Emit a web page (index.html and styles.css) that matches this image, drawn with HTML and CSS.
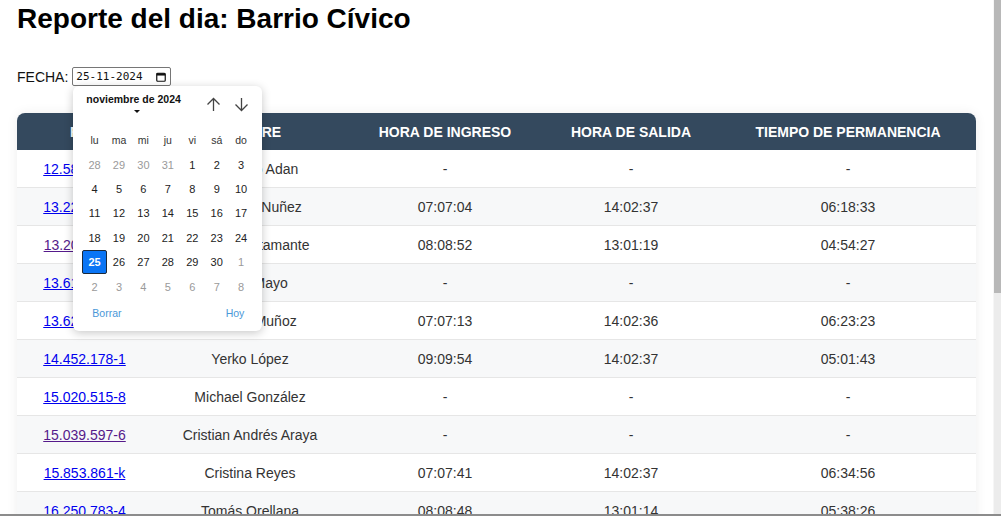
FILE: index.html
```html
<!DOCTYPE html>
<html lang="es">
<head>
<meta charset="utf-8">
<title>Reporte del dia</title>
<link rel="stylesheet" href="styles.css">
</head>
<body>
<div class="shell">
<div class="page">
  <h1 class="title">Reporte del dia: Barrio Cívico</h1>

  <div class="date-row">
    <label class="date-label">FECHA:</label>
    <div class="date-wrap">
      <span class="date-input">
        <span class="date-text">25-11-2024</span>
        <svg class="cal-icon" width="10" height="10" viewBox="0 0 10 10"><rect x="0.75" y="1.25" width="8.5" height="8" rx="1" fill="none" stroke="#111" stroke-width="1.2"/><rect x="0.75" y="1.25" width="8.5" height="2.3" fill="#111"/></svg>
      </span>
      <div class="picker">
        <div class="picker-head">
          <div class="month">
            <span class="month-name">noviembre de 2024</span>
            <span class="caret"></span>
          </div>
          <div class="arrows">
            <svg width="15" height="15" viewBox="0 0 15 15"><path d="M7.5 14V1.5M1.5 7.5L7.5 1.5L13.5 7.5" fill="none" stroke="#444" stroke-width="1.3"/></svg>
            <svg width="15" height="15" viewBox="0 0 15 15"><path d="M7.5 1V13.5M1.5 7.5L7.5 13.5L13.5 7.5" fill="none" stroke="#444" stroke-width="1.3"/></svg>
          </div>
        </div>
        <div class="cal-grid">
          <span class="dn">lu</span><span class="dn">ma</span><span class="dn">mi</span><span class="dn">ju</span><span class="dn">vi</span><span class="dn">sá</span><span class="dn">do</span>
          <span class="d other">28</span><span class="d other">29</span><span class="d other">30</span><span class="d other">31</span><span class="d">1</span><span class="d">2</span><span class="d">3</span>
          <span class="d">4</span><span class="d">5</span><span class="d">6</span><span class="d">7</span><span class="d">8</span><span class="d">9</span><span class="d">10</span>
          <span class="d">11</span><span class="d">12</span><span class="d">13</span><span class="d">14</span><span class="d">15</span><span class="d">16</span><span class="d">17</span>
          <span class="d">18</span><span class="d">19</span><span class="d">20</span><span class="d">21</span><span class="d">22</span><span class="d">23</span><span class="d">24</span>
          <span class="d sel">25</span><span class="d">26</span><span class="d">27</span><span class="d">28</span><span class="d">29</span><span class="d">30</span><span class="d other">1</span>
          <span class="d other">2</span><span class="d other">3</span><span class="d other">4</span><span class="d other">5</span><span class="d other">6</span><span class="d other">7</span><span class="d other">8</span>
        </div>
        <div class="picker-foot">
          <span class="foot-btn">Borrar</span>
          <span class="foot-btn">Hoy</span>
        </div>
      </div>
    </div>
  </div>

  <table class="report">
    <colgroup>
      <col class="c-rut"><col class="c-name"><col class="c-in"><col class="c-out"><col class="c-time">
    </colgroup>
    <thead>
      <tr><th>RUT</th><th>NOMBRE</th><th>HORA DE INGRESO</th><th>HORA DE SALIDA</th><th>TIEMPO DE PERMANENCIA</th></tr>
    </thead>
    <tbody>
      <tr><td><a href="#">12.584.102-3</a></td><td>Francisco Adan</td><td>-</td><td>-</td><td>-</td></tr>
      <tr><td><a href="#">13.221.456-7</a></td><td>Alejandro Nuñez</td><td>07:07:04</td><td>14:02:37</td><td>06:18:33</td></tr>
      <tr><td><a href="#" class="visited">13.205.889-k</a></td><td>Carlos Bustamante</td><td>08:08:52</td><td>13:01:19</td><td>04:54:27</td></tr>
      <tr><td><a href="#">13.614.270-2</a></td><td>Javier Mayo</td><td>-</td><td>-</td><td>-</td></tr>
      <tr><td><a href="#">13.627.905-1</a></td><td>Daniela Muñoz</td><td>07:07:13</td><td>14:02:36</td><td>06:23:23</td></tr>
      <tr><td><a href="#">14.452.178-1</a></td><td>Yerko López</td><td>09:09:54</td><td>14:02:37</td><td>05:01:43</td></tr>
      <tr><td><a href="#">15.020.515-8</a></td><td>Michael González</td><td>-</td><td>-</td><td>-</td></tr>
      <tr><td><a href="#" class="visited">15.039.597-6</a></td><td>Cristian Andrés Araya</td><td>-</td><td>-</td><td>-</td></tr>
      <tr><td><a href="#">15.853.861-k</a></td><td>Cristina Reyes</td><td>07:07:41</td><td>14:02:37</td><td>06:34:56</td></tr>
      <tr><td><a href="#">16.250.783-4</a></td><td>Tomás Orellana</td><td>08:08:48</td><td>13:01:14</td><td>05:38:26</td></tr>
      <tr><td><a href="#">16.718.240-5</a></td><td>Paula Rojas</td><td>07:58:10</td><td>14:01:52</td><td>06:03:42</td></tr>
      <tr><td><a href="#">17.102.334-9</a></td><td>Felipe Soto</td><td>-</td><td>-</td><td>-</td></tr>
      <tr><td><a href="#">17.455.901-2</a></td><td>Camila Torres</td><td>08:02:15</td><td>13:59:40</td><td>05:57:25</td></tr>
      <tr><td><a href="#">17.880.627-0</a></td><td>Diego Fuentes</td><td>07:45:03</td><td>14:02:37</td><td>06:17:34</td></tr>
      <tr><td><a href="#">18.034.512-6</a></td><td>Valentina Pérez</td><td>-</td><td>-</td><td>-</td></tr>
      <tr><td><a href="#">18.309.775-3</a></td><td>Sebastián Díaz</td><td>08:10:27</td><td>13:01:19</td><td>04:50:52</td></tr>
      <tr><td><a href="#">18.642.198-k</a></td><td>Francisca Vera</td><td>07:07:33</td><td>14:02:36</td><td>06:55:03</td></tr>
      <tr><td><a href="#">19.015.466-1</a></td><td>Matías Herrera</td><td>-</td><td>-</td><td>-</td></tr>
      <tr><td><a href="#">19.387.220-7</a></td><td>Javiera Castro</td><td>09:00:12</td><td>14:02:37</td><td>05:02:25</td></tr>
      <tr><td><a href="#">19.761.843-4</a></td><td>Nicolás Silva</td><td>08:08:48</td><td>13:01:14</td><td>04:52:26</td></tr>
    </tbody>
  </table>
</div>
<div class="vtrack"><div class="vthumb"></div></div>
</div>
<div class="bottom-line"></div>
</body>
</html>
```

FILE: styles.css
```css
html::-webkit-scrollbar { width: 0; }

body {
  margin: 0;
  font-family: "Liberation Sans", Arial, sans-serif;
  color: #000;
  background: #fff;
}

.shell {
  display: flex;
  align-items: flex-start;
}

.page {
  flex: 1;
  min-width: 0;
  padding: 3px 17px 0 17px;
}

.vtrack {
  position: sticky;
  top: 0;
  flex: 0 0 8px;
  width: 8px;
  height: 516px;
  background: #ececec;
  border-left: 1px solid #f6f6f6;
  box-sizing: border-box;
  display: flex;
  flex-direction: column;
}

.vthumb {
  height: 293px;
  background: #b8b8b8;
}

.title {
  margin: 0;
  font-size: 28px;
  font-weight: bold;
  line-height: 32px;
  color: #000;
}

.date-row {
  margin-top: 32px;
  display: flex;
  align-items: center;
  gap: 4px;
  font-size: 14px;
}

.date-label { color: #111; }

.date-wrap { position: relative; }

.date-input {
  box-sizing: border-box;
  display: flex;
  align-items: center;
  justify-content: space-between;
  width: 99px;
  height: 19px;
  padding: 0 4px 0 3px;
  border: 1px solid #767676;
  border-radius: 2px;
  background: #fff;
}

.date-text {
  font-family: "DejaVu Sans Mono", monospace;
  font-size: 11px;
  color: #111;
}

.cal-icon { display: block; }

.picker {
  position: absolute;
  left: 1px;
  top: 19px;
  width: 189px;
  height: 245px;
  box-sizing: border-box;
  background: #fff;
  border-radius: 6px;
  box-shadow: 0 2px 10px rgba(0, 0, 0, 0.22);
  z-index: 10;
  display: flex;
  flex-direction: column;
}

.picker-head {
  height: 42px;
  display: flex;
  justify-content: space-between;
  align-items: flex-start;
  padding: 7px 13px 0 13px;
  box-sizing: border-box;
}

.month {
  display: flex;
  flex-direction: column;
  align-items: center;
  gap: 4px;
}

.month-name {
  font-size: 10.5px;
  font-weight: bold;
  color: #111;
  line-height: 13px;
}

.caret {
  width: 0;
  height: 0;
  border-left: 3px solid transparent;
  border-right: 3px solid transparent;
  border-top: 3.5px solid #111;
  margin-left: 6px;
}

.arrows {
  display: flex;
  gap: 13px;
  padding-top: 4px;
}

.arrows svg { display: block; }

.cal-grid {
  display: grid;
  grid-template-columns: repeat(7, 1fr);
  grid-auto-rows: 24.4px;
  padding: 0 9px;
}

.dn, .d {
  display: flex;
  align-items: center;
  justify-content: center;
  font-size: 11px;
}

.dn { color: #333; font-size: 10.5px; }

.d { color: #222; }

.d.other { color: #9a9a9a; }

.d.sel {
  background: #0a75f5;
  color: #fff;
  font-weight: bold;
  border: 1px solid #1c2a3a;
  border-radius: 2px;
  box-sizing: border-box;
}

.picker-foot {
  flex: 1;
  display: flex;
  justify-content: space-between;
  align-items: center;
  padding: 0 18px 4px 19px;
}

.foot-btn {
  font-size: 10.5px;
  color: #4a98d8;
}

.report {
  margin-top: 27px;
  width: 100%;
  table-layout: fixed;
  border-collapse: separate;
  border-spacing: 0;
  border-radius: 8px 8px 0 0;
  overflow: hidden;
  box-shadow: 0 0 12px rgba(0, 0, 0, 0.07);
  font-size: 14px;
}

.c-rut { width: 135px; }
.c-name { width: 196px; }
.c-in { width: 194px; }
.c-out { width: 178px; }

.report th {
  height: 37px;
  padding: 0 6px;
  background: #34495e;
  color: #fff;
  font-weight: bold;
  text-align: center;
  white-space: nowrap;
}

.report td {
  height: 37px;
  padding: 0 6px;
  text-align: center;
  color: #333;
  border-bottom: 1px solid #e6e6e6;
  white-space: nowrap;
}

.report tbody tr:nth-child(even) td { background: #f7f8f9; }

.report a { color: #0000ee; }
.report a.visited { color: #551a8b; }

.bottom-line {
  position: fixed;
  left: 0;
  right: 0;
  bottom: 0;
  height: 2px;
  background: #8c8c8c;
}
```
